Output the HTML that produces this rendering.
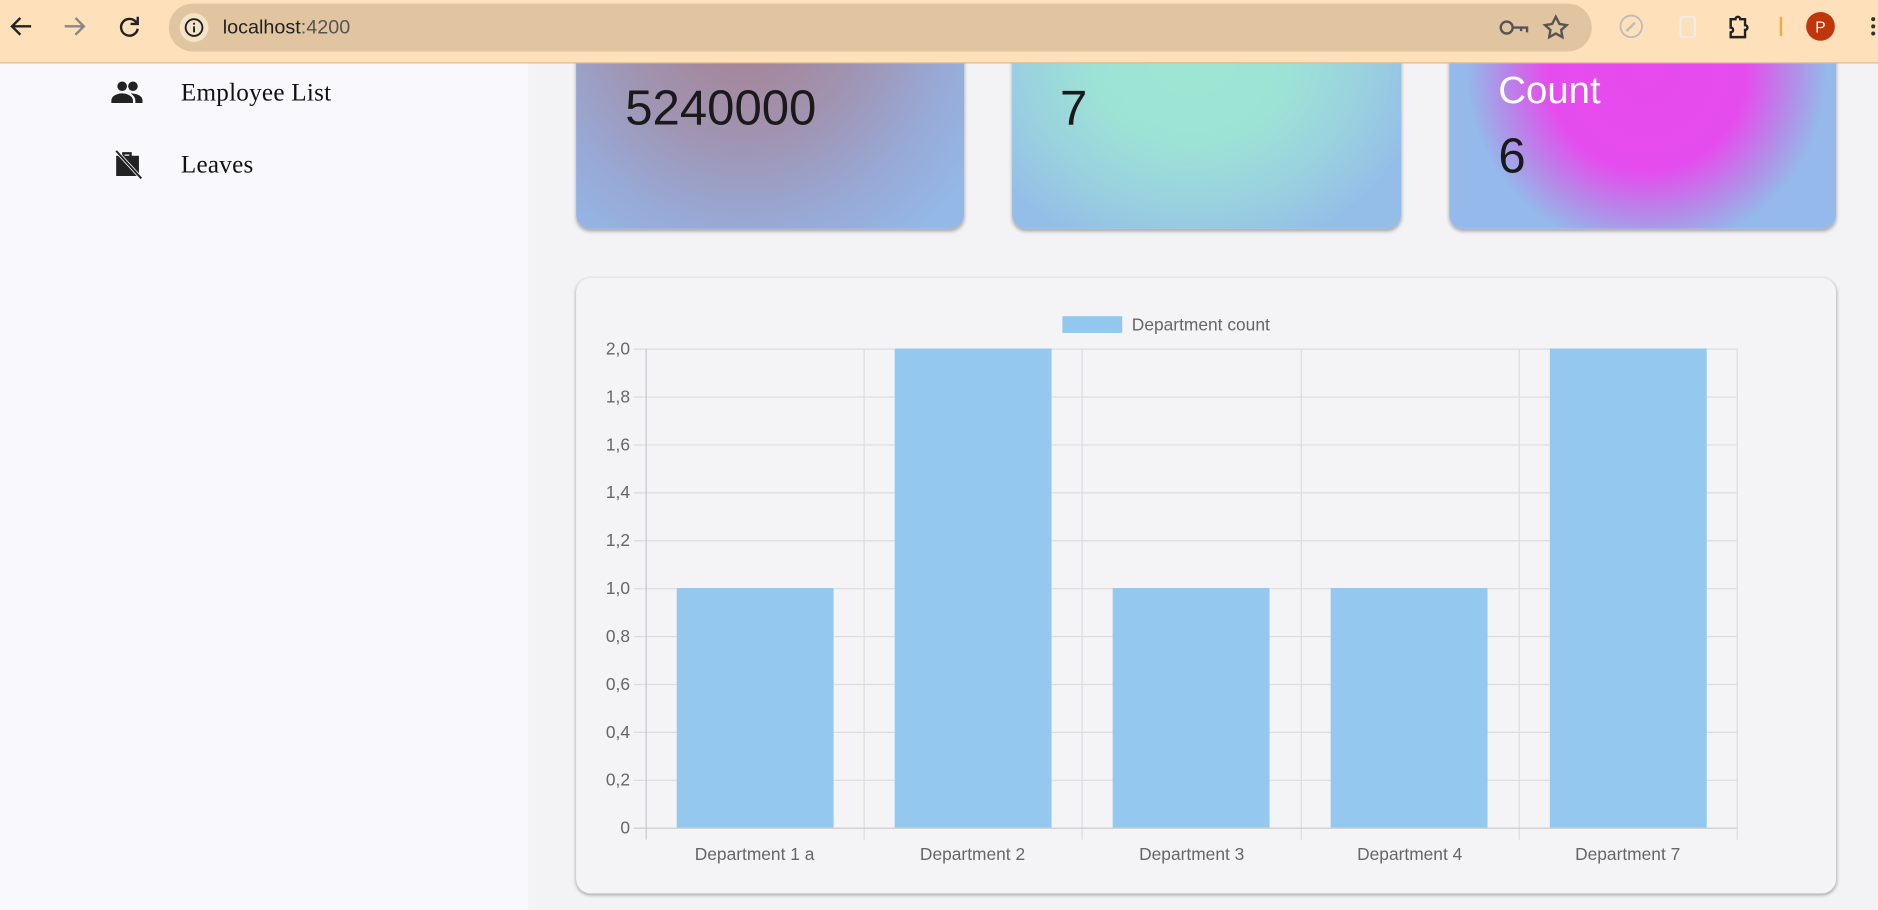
<!DOCTYPE html>
<html><head><meta charset="utf-8"><style>
html,body{margin:0;padding:0;width:1878px;height:910px;overflow:hidden;background:#f3f3f5;font-family:"Liberation Sans",sans-serif}
#w{position:absolute;left:0;top:0;width:1568px;height:760px;transform:scale(1.19770);transform-origin:0 0;background:#f3f3f5}
.bar{position:absolute;left:0;top:0;width:1568px;height:52px;background:#fee0bb;border-bottom:1px solid #d9b990;z-index:5}
.omni{position:absolute;left:141px;top:3px;width:1188px;height:40px;background:#e0c5a0;border-radius:20px}
.side{position:absolute;left:0;top:53px;width:441px;height:707px;background:#f9f9fd}
.item{position:absolute;left:151px;font-family:"Liberation Serif",serif;font-size:21px;color:#111;letter-spacing:0.2px}
.card{position:absolute;top:-20px;height:211px;border-radius:12px;box-shadow:0 2px 3px rgba(0,0,0,.3);overflow:hidden}
.num{position:absolute;font-size:41px;color:#1a1a1a}
.chart{position:absolute;left:481px;top:232px;width:1052px;height:514px;border-radius:12px;background:#f4f4f6;box-shadow:0 1px 3px rgba(0,0,0,.35)}
</style></head><body><div id="w">
<div class="bar">
 <svg width="1568" height="52" style="position:absolute;left:0;top:0">
  <g fill="none" stroke="#222" stroke-width="2"><path d="M26 22H10M17 15l-7 7 7 7"/></g>
  <g fill="none" stroke="#888" stroke-width="2"><path d="M54 22h16M63 15l7 7-7 7"/></g>
  <g fill="none" stroke="#222" stroke-width="2"><path d="M114 19a7 7 0 1 0 1 5"/><path d="M115 14v6h-6"/></g>
 </svg>
 <div class="omni">
  <svg width="30" height="30" style="position:absolute;left:6px;top:5px"><circle cx="15" cy="15" r="12" fill="#f5e3c7"/><circle cx="15" cy="15" r="7" fill="none" stroke="#222" stroke-width="1.6"/><rect x="14.2" y="14" width="1.6" height="5" fill="#222"/><rect x="14.2" y="11" width="1.6" height="1.6" fill="#222"/></svg>
  <span style="position:absolute;left:45px;top:11px;font-size:16.5px;color:#222">localhost<span style="color:#555">:4200</span></span>
  <svg width="80" height="40" style="position:absolute;left:1100px;top:0"><g fill="none" stroke="#555" stroke-width="2"><circle cx="17" cy="20" r="5"/><path d="M22 20h12v4M29 20v3"/><path d="M58 11l3 6 6 1-4.5 4 1 6-5.5-3-5.5 3 1-6-4.5-4 6-1z"/></g></svg>
 </div>
 <svg width="240" height="52" style="position:absolute;left:1340px;top:0">
  <circle cx="22" cy="22" r="9" fill="none" stroke="#bbb" stroke-width="1.5"/><path d="M18 26l7-7" stroke="#bbb" stroke-width="2"/>
  <rect x="63" y="14" width="12" height="17" rx="2" fill="none" stroke="#eee" stroke-width="1.5"/>
  <path d="M105 16h4a2 2 0 0 1 4 0h4v5a2 2 0 0 1 0 4v6h-12v-4a2 2 0 0 0 0-4z" fill="none" stroke="#222" stroke-width="2"/>
  <rect x="146" y="14" width="2" height="16" fill="#f5a742"/>
  <circle cx="180" cy="22" r="12" fill="#c0360c"/><text x="180" y="27" font-size="13" fill="#fff" text-anchor="middle" font-family="Liberation Sans">P</text>
  <g fill="#333"><circle cx="224" cy="16" r="1.7"/><circle cx="224" cy="22" r="1.7"/><circle cx="224" cy="28" r="1.7"/></g>
 </svg>
</div>
<div class="side">
 <svg width="30" height="24" style="position:absolute;left:92px;top:12px"><g fill="#222"><circle cx="10" cy="7" r="4"/><circle cx="19" cy="7" r="4"/><path d="M1 19c0-4 5-6 9-6s9 2 9 6v2H1z"/><path d="M17 13c4 0 10 1.5 10 6v2h-6v-2c0-2-1-4-4-6z"/></g></svg>
 <div class="item" style="top:12px">Employee List</div>
 <svg width="30" height="28" style="position:absolute;left:92px;top:70px"><g fill="#222"><path d="M10 4h8v3h6v17H5V7h5z M12 6v1h4V6z"/></g><path d="M5 3l21 23" stroke="#f9f9fd" stroke-width="3"/><path d="M5 3l21 23" stroke="#222" stroke-width="1.6"/></svg>
 <div class="item" style="top:72px">Leaves</div>
</div>
<div class="card" style="left:481px;width:324px;background:radial-gradient(ellipse 230px 240px at 140px 30px,#a87e8c 0%,#a094b2 45%,#98a9d6 75%,#94b8e8 100%)"><div class="num" style="left:41px;top:87px">5240000</div></div>
<div class="card" style="left:845px;width:325px;background:radial-gradient(ellipse 200px 170px at 150px 70px,#9ee6d4 0%,#9de3d5 40%,#99cfe0 75%,#94bde8 100%)"><div class="num" style="left:40px;top:87px">7</div></div>
<div class="card" style="left:1210px;width:323px;background:radial-gradient(ellipse 150px 150px at 165px 80px,#e74aed 0%,#e54cee 55%,#b48ae8 80%,#94b9ea 100%)">
 <div style="position:absolute;left:41px;top:77px;font-size:32px;color:#fff">Count</div>
 <div class="num" style="left:41px;top:127px">6</div></div>
<div class="chart"></div>
<svg width="1568" height="760" style="position:absolute;left:0;top:0" font-family="Liberation Sans" font-size="14.5" fill="#666">
 <rect x="887" y="264" width="50" height="14" fill="#93c8ee"/>
 <text x="945" y="276">Department count</text>
 <g stroke="#dcdcdf" stroke-width="1">
  <path d="M529 291.5H1450M529 331.5H1450M529 371.5H1450M529 411.5H1450M529 451.5H1450M529 491.5H1450M529 531.5H1450M529 571.5H1450M529 611.5H1450M529 651.5H1450"/>
  <path d="M721.5 291V701M903.5 291V701M1086.5 291V701M1268.5 291V701M1450.5 291V701"/>
 </g>
 <g fill="#94c8ef">
  <rect x="565" y="491" width="131" height="200"/>
  <rect x="747" y="291" width="131" height="400"/>
  <rect x="929" y="491" width="131" height="200"/>
  <rect x="1111" y="491" width="131" height="200"/>
  <rect x="1294" y="291" width="131" height="400"/>
 </g>
 <path d="M539.5 291V701M529 691.5H1450" stroke="#c8c8cc" stroke-width="1"/>
 <g text-anchor="end">
  <text x="526" y="296">2,0</text><text x="526" y="336">1,8</text><text x="526" y="376">1,6</text><text x="526" y="416">1,4</text><text x="526" y="456">1,2</text><text x="526" y="496">1,0</text><text x="526" y="536">0,8</text><text x="526" y="576">0,6</text><text x="526" y="616">0,4</text><text x="526" y="656">0,2</text><text x="526" y="696">0</text>
 </g>
 <g text-anchor="middle">
  <text x="630" y="718">Department 1 a</text><text x="812" y="718">Department 2</text><text x="995" y="718">Department 3</text><text x="1177" y="718">Department 4</text><text x="1359" y="718">Department 7</text>
 </g>
</svg>
</div></body></html>
